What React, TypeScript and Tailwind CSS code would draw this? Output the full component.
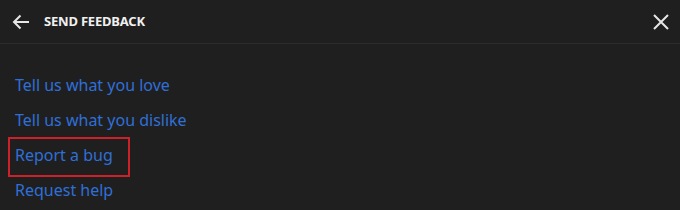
import React from 'react';

const links = [
  'Tell us what you love',
  'Tell us what you dislike',
  'Report a bug',
  'Request help',
];

const App: React.FC = () => {
  return (
    <div
      className="w-[680px] h-[210px] bg-[#1f1f1f] overflow-hidden"
      style={{ fontFamily: '"Noto Sans", "Open Sans", sans-serif' }}
    >
      {/* header */}
      <div className="h-[44px] flex items-center border-b border-[#2c2c2c] pl-[11px] pr-[10px]">
        <svg width="20" height="20" viewBox="0 0 20 20" className="text-[#e6e6e6]">
          <path d="M18 10H3M9.5 3.5L3 10l6.5 6.5" fill="none" stroke="currentColor" strokeWidth="2" />
        </svg>
        <span className="ml-[13px] text-[13px] font-bold text-[#f0f0f0] tracking-[-0.2px]">SEND FEEDBACK</span>
        <svg width="18" height="18" viewBox="0 0 18 18" className="ml-auto text-[#e6e6e6]">
          <path d="M2 2l14 14M16 2L2 16" fill="none" stroke="currentColor" strokeWidth="2" />
        </svg>
      </div>

      <ul className="pl-[15px] pt-[29px] flex flex-col gap-[11px]">
        {links.map((l) =>
          l === 'Report a bug' ? (
            <li key={l} className="h-[24px] flex items-center">
              <span className="-ml-[7px] mt-[4px] pl-[5px] pr-[15px] h-[40px] flex items-center border-2 border-[#cc2129] text-[16px] text-[#2f6fd8]">
                <span className="-mt-[4px]">{l}</span>
              </span>
            </li>
          ) : (
            <li key={l} className="h-[24px] flex items-center text-[16px] text-[#2f6fd8]">
              {l}
            </li>
          )
        )}
      </ul>
    </div>
  );
};

export default App;
